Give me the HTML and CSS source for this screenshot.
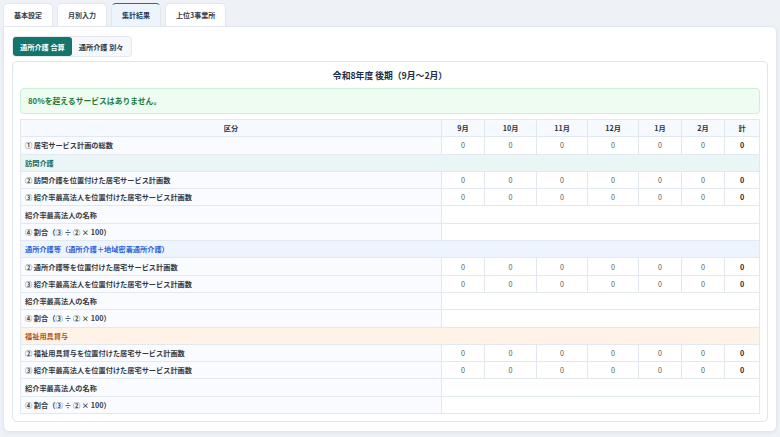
FILE: index.html
```html
<!doctype html>
<html>
  <head>
    <meta charset="utf-8">
    <link rel="stylesheet" href="styles.css">
    <title>集計結果</title>
  </head>
  <body>
    <div id="page-wrapper">
      <div class="tabs">
        <div class="tab">基本設定</div>
        <div class="tab">月別入力</div>
        <div class="tab active">集計結果</div>
        <div class="tab">上位3事業所</div>
      </div>
      <div class="panel">
        <div class="segment">
          <button class="seg-btn active">通所介護 合算</button>
          <button class="seg-btn">通所介護 別々</button>
        </div>
        <div class="card">
          <h1 class="title">令和8年度 後期（9月〜2月）</h1>
          <div class="alert">80%を超えるサービスはありません。</div>
          <table class="summary">
            <colgroup>
              <col class="col-label">
              <col style="width:43px">
              <col style="width:52px">
              <col style="width:51px">
              <col style="width:51px">
              <col style="width:43px">
              <col style="width:43px">
              <col style="width:35px">
            </colgroup>
            <thead>
              <tr><th>区分</th><th>9月</th><th>10月</th><th>11月</th><th>12月</th><th>1月</th><th>2月</th><th>計</th></tr>
            </thead>
            <tbody>
              <tr><td class="label">① 居宅サービス計画の総数</td><td>0</td><td>0</td><td>0</td><td>0</td><td>0</td><td>0</td><td class="total">0</td></tr>

              <tr class="group teal"><td colspan="8">訪問介護</td></tr>
              <tr><td class="label">② 訪問介護を位置付けた居宅サービス計画数</td><td>0</td><td>0</td><td>0</td><td>0</td><td>0</td><td>0</td><td class="total">0</td></tr>
              <tr><td class="label">③ 紹介率最高法人を位置付けた居宅サービス計画数</td><td>0</td><td>0</td><td>0</td><td>0</td><td>0</td><td>0</td><td class="total">0</td></tr>
              <tr><td class="label">紹介率最高法人の名称</td><td colspan="7"></td></tr>
              <tr><td class="label">④ 割合（③ ÷ ② × 100）</td><td colspan="7"></td></tr>

              <tr class="group blue"><td colspan="8">通所介護等（通所介護＋地域密着通所介護）</td></tr>
              <tr><td class="label">② 通所介護等を位置付けた居宅サービス計画数</td><td>0</td><td>0</td><td>0</td><td>0</td><td>0</td><td>0</td><td class="total">0</td></tr>
              <tr><td class="label">③ 紹介率最高法人を位置付けた居宅サービス計画数</td><td>0</td><td>0</td><td>0</td><td>0</td><td>0</td><td>0</td><td class="total">0</td></tr>
              <tr><td class="label">紹介率最高法人の名称</td><td colspan="7"></td></tr>
              <tr><td class="label">④ 割合（③ ÷ ② × 100）</td><td colspan="7"></td></tr>

              <tr class="group orange"><td colspan="8">福祉用具貸与</td></tr>
              <tr><td class="label">② 福祉用具貸与を位置付けた居宅サービス計画数</td><td>0</td><td>0</td><td>0</td><td>0</td><td>0</td><td>0</td><td class="total">0</td></tr>
              <tr><td class="label">③ 紹介率最高法人を位置付けた居宅サービス計画数</td><td>0</td><td>0</td><td>0</td><td>0</td><td>0</td><td>0</td><td class="total">0</td></tr>
              <tr><td class="label">紹介率最高法人の名称</td><td colspan="7"></td></tr>
              <tr><td class="label">④ 割合（③ ÷ ② × 100）</td><td colspan="7"></td></tr>
            </tbody>
          </table>
        </div>
      </div>
    </div>
  </body>
</html>
```

FILE: styles.css
```css
body {
  margin: 0;
  background: #eef2f7;
  font-family: "Noto Sans CJK JP", sans-serif;
  color: #2b3440;
}

#page-wrapper {
  padding: 3px 3px 5px 3px;
}

.tabs {
  display: flex;
  gap: 4px;
  height: 23px;
}

.tab {
  padding: 0 10px;
  line-height: 22px;
  font-size: 7px;
  font-weight: bold;
  color: #333a44;
  background: #fff;
  border: 1px solid #dfe6ee;
  border-bottom: none;
  border-radius: 5px 5px 0 0;
}

.tab.active {
  background: #eef4fc;
  color: #1f3a5c;
  border-top: 1px solid #1e7a70;
}

.panel {
  background: #fff;
  border: 1px solid #e1e7ef;
  border-radius: 0 6px 6px 6px;
  box-shadow: 0 1px 3px rgba(30, 50, 80, 0.06);
  padding: 9px 8px 9px 8px;
}

.segment {
  display: flex;
  width: max-content;
  background: #f6f8fb;
  border: 1px solid #e3e8ef;
  border-radius: 4px;
}

.seg-btn {
  font-family: inherit;
  font-size: 7.2px;
  font-weight: bold;
  color: #2b3440;
  background: none;
  border: none;
  border-radius: 3px;
  padding: 0 7px;
  height: 19px;
}

.seg-btn.active {
  background: #13756b;
  color: #fff;
}

.card {
  margin-top: 4px;
  border: 1px solid #dde5ee;
  border-radius: 5px;
  padding: 7px 7px 7px 7px;
}

.title {
  margin: 0;
  text-align: center;
  font-size: 8.8px;
  line-height: 14px;
  color: #1c2d45;
}

.alert {
  margin-top: 5px;
  background: #eefcf2;
  border: 1px solid #cdeed7;
  border-radius: 4px;
  padding: 0 7px;
  line-height: 24px;
  font-size: 7.8px;
  font-weight: bold;
  color: #1e7d3c;
}

.summary {
  margin-top: 5px;
  width: 740px;
  table-layout: fixed;
  border-collapse: collapse;
  font-size: 7.2px;
}

.summary th,
.summary td {
  border: 1px solid #e1e8f0;
  height: 16.3px;
  padding: 0 4px;
  text-align: center;
  color: #555d66;
}

.summary th {
  background: #f6f9fd;
  font-weight: bold;
  color: #2b3440;
}

.summary td.label {
  text-align: left;
  background: #f9fbfe;
  font-weight: bold;
  color: #333a44;
}

.summary td.total {
  font-weight: bold;
  color: #1f2630;
}

.summary .group td {
  text-align: left;
  font-weight: bold;
}

.group.teal td {
  background: #eaf6f5;
  color: #136f68;
}

.group.blue td {
  background: #eef4fe;
  color: #2a62d6;
}

.group.orange td {
  background: #fff3e7;
  color: #b4551a;
}
```
